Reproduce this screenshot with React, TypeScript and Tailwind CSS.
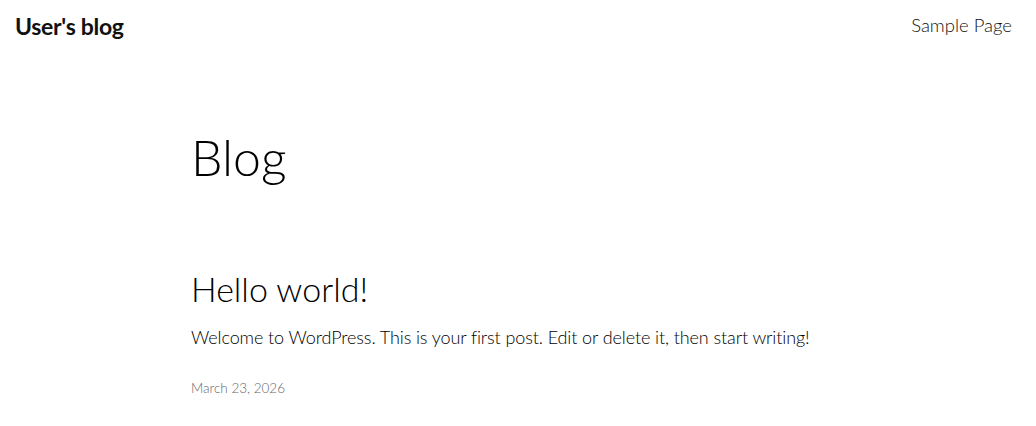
export default function App() {
  return (
    <div className="min-h-screen bg-white text-black font-['Lato',sans-serif]">
      <header className="flex items-center justify-between pl-[15px] pr-[24px] h-[52px]">
        <a className="text-[23px] font-bold tracking-[-0.3px] text-[#111]">User's blog</a>
        <nav>
          <a className="text-[18.5px] font-light text-[#111]">Sample Page</a>
        </nav>
      </header>

      <main className="mx-auto w-[654px]">
        <h1 className="mt-[80px] text-[50px] font-light leading-none">Blog</h1>

        <article className="mt-[90px]">
          <h2 className="text-[34px] font-light leading-none">Hello world!</h2>
          <p className="mt-[18px] text-[18px] font-light tracking-[-0.1px] whitespace-nowrap">
            Welcome to WordPress. This is your first post. Edit or delete it, then start writing!
          </p>
          <div className="mt-[27px] text-[13.5px] font-light text-[#666]">March 23, 2026</div>
        </article>
      </main>
    </div>
  )
}
